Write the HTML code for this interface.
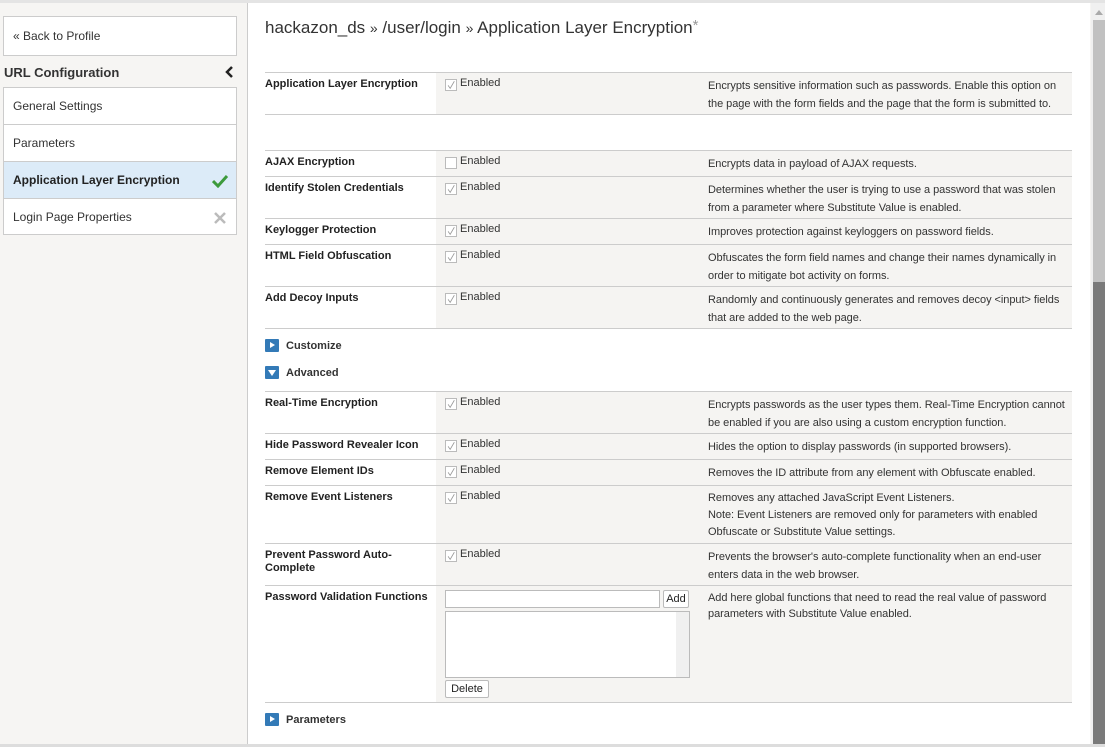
<!DOCTYPE html>
<html><head><style>
*{margin:0;padding:0;box-sizing:border-box}
body{width:1105px;height:747px;overflow:hidden;background:#f6f5f3;font-family:"Liberation Sans",Arial,sans-serif;color:#222;position:relative}
.a{position:absolute}
.side{left:3px;width:234px;background:#fff;border:1px solid #ccc}
.nav{font-size:12px;padding-left:9px;border-bottom:1px solid #ccc;height:37px;line-height:36px;color:#333;position:relative}
.main{left:247px;top:3px;width:843px;height:741px;background:#fff;border-left:1px solid #ccc}
.row{position:absolute;left:265px;width:807px;border-bottom:1px solid #ccc}
.row .c{position:absolute;left:171px;top:0;bottom:0;right:0;background:#f5f4f2}
.lbl{position:absolute;left:0;top:5px;width:165px;font-size:11px;font-weight:bold;color:#222;line-height:13px}
.cb{position:absolute;left:9px;top:6px;width:12px;height:12px;border:1px solid #bbb;background:#fff}
.en{position:absolute;left:24px;top:4px;font-size:11px;color:#333}
.d{position:absolute;left:272px;top:4px;width:360px;font-size:11px;line-height:18px;color:#333;letter-spacing:-0.05px}
.tg{position:absolute;left:265px;width:14px;height:13px;background:#337ab7;border-radius:1px}
.tl{position:absolute;left:286px;font-size:11px;font-weight:bold;color:#333}
</style></head><body>
<svg width="0" height="0" style="position:absolute"><defs><symbol id="ck" viewBox="0 0 12 12"><path d="M2.5 6.5L5 10L10 1.5" stroke="#999" stroke-width="1" fill="none"/></symbol></defs></svg>
<div class="a" style="left:0;top:0;width:1105px;height:3px;background:#e4e4e4"></div>
<div class="a side" style="top:16px;height:40px;"><div class="nav" style="border:none;height:38px;line-height:38px">« Back to Profile</div></div>
<div class="a" style="left:4px;top:65px;font-size:13px;font-weight:bold;color:#333">URL Configuration</div>
<svg class="a" style="left:225px;top:66px" width="10" height="12"><path d="M7 1L2 6L7 11" stroke="#222" stroke-width="2.5" fill="none"/></svg>
<div class="a side" style="top:87px;height:148px;border-bottom:1px solid #ccc">
<div class="nav">General Settings</div>
<div class="nav">Parameters</div>
<div class="nav" style="background:#dcebf8;font-weight:bold;color:#222">Application Layer Encryption<svg style="position:absolute;right:8px;top:12px" width="16" height="14"><path d="M1 7L6 12L15 2" stroke="#3c9a3c" stroke-width="3" fill="none"/></svg></div>
<div class="nav" style="border:none">Login Page Properties<svg style="position:absolute;right:10px;top:13px" width="12" height="12"><path d="M1 1L11 11M11 1L1 11" stroke="#bbb" stroke-width="2.5"/></svg></div>
</div>
<div class="a main"></div>
<div class="a" style="left:1091px;top:3px;width:14px;height:744px;background:#f0f0f0"></div>
<div class="a" style="left:1093px;top:20px;width:12px;height:262px;background:#c1c1c1"></div>
<div class="a" style="left:1093px;top:282px;width:12px;height:465px;background:#7a7a7a"></div>
<div class="a" style="left:1095px;top:10px;width:0;height:0;border:4px solid transparent;border-bottom:5px solid #aaa;border-top:none"></div>
<div class="a" style="left:0;top:744px;width:1105px;height:3px;background:#ddd"></div>
<div class="a" style="left:265px;top:18px;font-size:17px;color:#333">hackazon_ds <span style="font-size:14px">»</span> /user/login <span style="font-size:14px">»</span> Application Layer Encryption<span style="color:#999;font-size:15px;vertical-align:top;position:relative;top:-1px">*</span></div>

<div class="row" style="top:72px;height:43px;border-top:1px solid #ccc"><div class="c"></div><div class="lbl">Application Layer Encryption</div><div class="c" style="background:none"><svg class="cb"><use href="#ck"/></svg><div class="en">Enabled</div><div class="d">Encrypts sensitive information such as passwords. Enable this option on the page with the form fields and the page that the form is submitted to.</div></div></div>

<div class="row" style="top:150px;height:27px;border-top:1px solid #ccc"><div class="c"></div><div class="lbl">AJAX Encryption</div><div class="c" style="background:none"><div class="cb"></div><div class="en">Enabled</div><div class="d">Encrypts data in payload of AJAX requests.</div></div></div>
<div class="row" style="top:177px;height:42px"><div class="c"></div><div class="lbl">Identify Stolen Credentials</div><div class="c" style="background:none"><svg class="cb"><use href="#ck"/></svg><div class="en">Enabled</div><div class="d">Determines whether the user is trying to use a password that was stolen from a parameter where Substitute Value is enabled.</div></div></div>
<div class="row" style="top:219px;height:26px"><div class="c"></div><div class="lbl">Keylogger Protection</div><div class="c" style="background:none"><svg class="cb"><use href="#ck"/></svg><div class="en">Enabled</div><div class="d">Improves protection against keyloggers on password fields.</div></div></div>
<div class="row" style="top:245px;height:42px"><div class="c"></div><div class="lbl">HTML Field Obfuscation</div><div class="c" style="background:none"><svg class="cb"><use href="#ck"/></svg><div class="en">Enabled</div><div class="d">Obfuscates the form field names and change their names dynamically in order to mitigate bot activity on forms.</div></div></div>
<div class="row" style="top:287px;height:42px"><div class="c"></div><div class="lbl">Add Decoy Inputs</div><div class="c" style="background:none"><svg class="cb"><use href="#ck"/></svg><div class="en">Enabled</div><div class="d">Randomly and continuously generates and removes decoy &lt;input&gt; fields that are added to the web page.</div></div></div>

<div class="tg" style="top:339px"><div style="position:absolute;left:5px;top:3px;border-left:5px solid #fff;border-top:3.5px solid transparent;border-bottom:3.5px solid transparent"></div></div>
<div class="tl" style="top:340px">Customize</div>
<div class="tg" style="top:366px"><div style="position:absolute;left:3px;top:4px;border-top:6px solid #fff;border-left:4px solid transparent;border-right:4px solid transparent"></div></div>
<div class="tl" style="top:367px">Advanced</div>

<div class="row" style="top:391px;height:43px;border-top:1px solid #ccc"><div class="c"></div><div class="lbl">Real-Time Encryption</div><div class="c" style="background:none"><svg class="cb"><use href="#ck"/></svg><div class="en">Enabled</div><div class="d">Encrypts passwords as the user types them. Real-Time Encryption cannot be enabled if you are also using a custom encryption function.</div></div></div>
<div class="row" style="top:434px;height:26px"><div class="c"></div><div class="lbl">Hide Password Revealer Icon</div><div class="c" style="background:none"><svg class="cb"><use href="#ck"/></svg><div class="en">Enabled</div><div class="d">Hides the option to display passwords (in supported browsers).</div></div></div>
<div class="row" style="top:460px;height:26px"><div class="c"></div><div class="lbl">Remove Element IDs</div><div class="c" style="background:none"><svg class="cb"><use href="#ck"/></svg><div class="en">Enabled</div><div class="d">Removes the ID attribute from any element with Obfuscate enabled.</div></div></div>
<div class="row" style="top:486px;height:58px"><div class="c"></div><div class="lbl">Remove Event Listeners</div><div class="c" style="background:none"><svg class="cb"><use href="#ck"/></svg><div class="en">Enabled</div><div class="d" style="line-height:17px">Removes any attached JavaScript Event Listeners.<br>Note: Event Listeners are removed only for parameters with enabled Obfuscate or Substitute Value settings.</div></div></div>
<div class="row" style="top:544px;height:42px"><div class="c"></div><div class="lbl">Prevent Password Auto-Complete</div><div class="c" style="background:none"><svg class="cb"><use href="#ck"/></svg><div class="en">Enabled</div><div class="d">Prevents the browser's auto-complete functionality when an end-user enters data in the web browser.</div></div></div>
<div class="row" style="top:586px;height:117px"><div class="c"></div><div class="lbl">Password Validation Functions</div><div class="c" style="background:none">
<div class="a" style="left:9px;top:4px;width:215px;height:18px;border:1px solid #bbb;background:#fff"></div>
<div class="a" style="left:227px;top:4px;width:26px;height:18px;border:1px solid #bbb;border-radius:2px;background:#fff;font-size:11px;line-height:16px;text-align:center">Add</div>
<div class="a" style="left:9px;top:25px;width:245px;height:67px;border:1px solid #bbb;background:#fff"><div style="position:absolute;right:0;top:0;width:13px;height:65px;background:#f0f0f0"></div></div>
<div class="a" style="left:9px;top:94px;width:44px;height:18px;border:1px solid #bbb;border-radius:2px;background:#fff;font-size:11px;line-height:16px;text-align:center">Delete</div>
<div class="d" style="line-height:16px">Add here global functions that need to read the real value of password parameters with Substitute Value enabled.</div></div></div>

<div class="tg" style="top:713px"><div style="position:absolute;left:5px;top:3px;border-left:5px solid #fff;border-top:3.5px solid transparent;border-bottom:3.5px solid transparent"></div></div>
<div class="tl" style="top:714px">Parameters</div>
</body></html>
